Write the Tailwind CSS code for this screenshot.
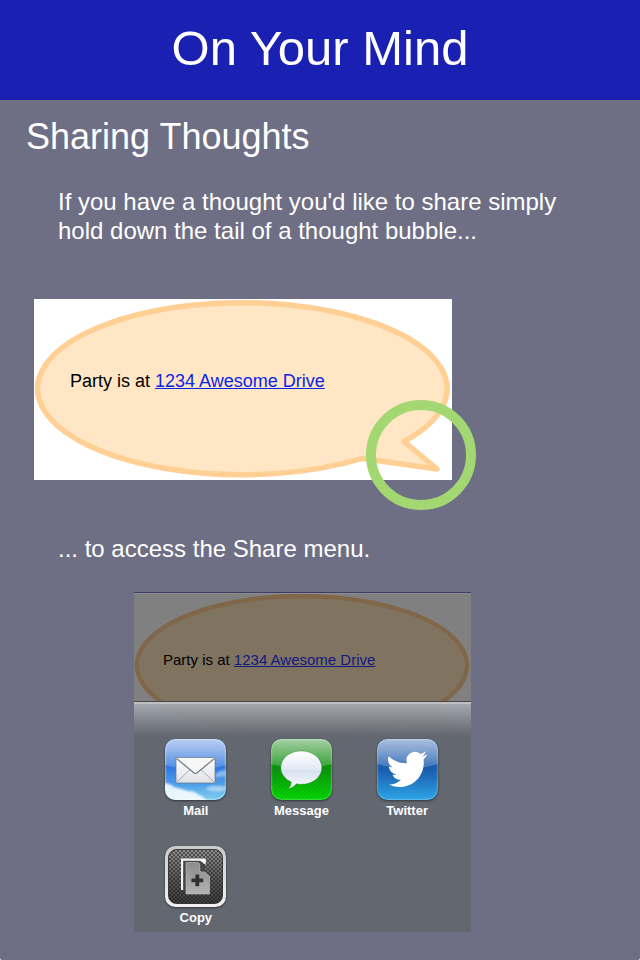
<!DOCTYPE html>
<html lang="en">
<head>
<meta charset="utf-8">
<meta name="viewport" content="width=device-width, initial-scale=1">
<title>On Your Mind</title>
<script src="https://cdn.jsdelivr.net/npm/@tailwindcss/browser@4"></script>
</head>
<body class="bg-white font-['Liberation_Sans',Arial,sans-serif]">
<div class="min-h-screen bg-[#6e6e84] text-white rounded-b-xs">
  <header class="bg-[#1a20b2] pt-6 pb-7 text-center">
    <h1 class="text-[49px] leading-12">On Your Mind</h1>
  </header>

  <main class="pt-[19px] pb-7">
    <h2 class="pl-[26px] text-[36px] leading-9">Sharing Thoughts</h2>
    <p class="mt-8 px-[58px] text-2xl leading-[29px]">If you have a thought you'd like to share simply hold down the tail of a thought bubble...</p>

    <figure class="relative mt-[54px] ml-[34px] w-[418px] h-[181px] bg-white pt-[70px] pl-9">
      <svg class="absolute inset-0 w-full" viewBox="0 0 418 181" aria-hidden="true">
        <path d="M370 142.500 L403 170 L328 159.500 A204.800 86 0 1 1 370 142.500Z" fill="#ffe6c5" stroke="#ffcf94" stroke-width="5.400" stroke-linejoin="round"/>
      </svg>
      <p class="relative text-lg leading-6 text-black">Party is at <a href="#" class="text-[#0b24e8] underline">1234 Awesome Drive</a></p>
      <div class="absolute left-[332px] top-[101px] size-[110px] rounded-full border-[10px] border-[#a3d772]"></div>
    </figure>

    <p class="mt-[54px] px-[58px] text-2xl leading-[29px]">... to access the Share menu.</p>

    <section class="relative mt-[29px] ml-[134px] w-[337px] bg-[#808080] border-t border-[#3f3d68]" aria-label="Share menu">
      <svg class="absolute left-0 top-0 w-full" viewBox="0 0 418 181" aria-hidden="true">
        <path d="M370 142.500 L403 170 L328 159.500 A204.800 86 0 1 1 370 142.500Z" fill="#807360" stroke="#80674a" stroke-width="5.400" stroke-linejoin="round"/>
      </svg>
      <div class="relative h-[108px] pt-14 pl-[29px] border-t border-[#8e8e8e]">
        <p class="text-[15px] leading-5 text-black">Party is at <a href="#" class="text-[#101a80] underline">1234 Awesome Drive</a></p>
      </div>
      <div class="relative border-t border-[#4a4746]">
        <div class="h-[2px] bg-[#bfbfc4]"></div>
        <div class="h-8 bg-linear-to-b from-[#a8acb4]/90 to-[#62666f]/95"></div>
        <div class="grid grid-cols-3 justify-items-center gap-y-[27px] bg-[#636870] pl-[9px] pr-[11px] pt-[3px] pb-[6px] text-[13px] leading-4 font-bold text-white text-shadow-[0_1px_1px_rgb(0_0_0/0.9)]">
          <button type="button" class="flex flex-col items-center gap-[3px]">
            <svg class="size-[61px] drop-shadow-[0_1px_1px_rgb(0_0_0/0.5)]" viewBox="0 0 61 61" aria-hidden="true">
              <defs>
                <linearGradient id="sky" x2="0" y2="1"><stop offset="0" stop-color="#4c83e0"/><stop offset=".45" stop-color="#2f76e0"/><stop offset=".75" stop-color="#4fa0ea"/><stop offset="1" stop-color="#84d0ee"/></linearGradient>
                <linearGradient id="gloss" x2="0" y2="1"><stop offset="0" stop-color="#fff" stop-opacity=".6"/><stop offset="1" stop-color="#fff" stop-opacity=".15"/></linearGradient>
                <linearGradient id="paper" x2="0" y2="1"><stop offset="0" stop-color="#fff"/><stop offset="1" stop-color="#dfe1e4"/></linearGradient>
                <clipPath id="tile"><rect width="61" height="61" rx="10.500"/></clipPath>
                <filter id="soft"><feGaussianBlur stdDeviation="1.300"/></filter>
              </defs>
              <g clip-path="url(#tile)">
                <rect width="61" height="61" fill="url(#sky)"/>
                <g fill="#fff" filter="url(#soft)">
                  <path d="M-2 44 Q5 44 9 48 Q17 50 23 52 Q30 52 34 56 Q40 58 42 63 H-2Z" opacity=".85"/>
                  <path d="M40 50 Q46 45 52 47 Q58 46 62 49 L58 52 Q48 54 40 50Z" opacity=".45"/>
                  <path d="M50 36 Q54 31 61 31 V38 Q55 36 52 39Z" opacity=".4"/>
                </g>
                <path d="M0 0H61V26Q30 35 0 26Z" fill="url(#gloss)"/>
                <rect x=".7" y=".7" width="59.600" height="59.600" rx="10" fill="none" stroke="#fff" stroke-opacity=".35"/>
              </g>
              <rect x="11" y="18.500" width="39" height="25.500" rx=".8" fill="url(#paper)" stroke="#62728c" stroke-width=".7"/>
              <path d="M11.500 43.500 L25.500 30 M49.500 43.500 L35.500 30" stroke="#a4a7ac" stroke-width=".9"/>
              <path d="M11.500 19 L28.800 33.300 Q30.500 34.700 32.200 33.300 L49.500 19Z" fill="#f7f7f8"/>
              <path d="M11.500 19.500 L28.800 33.800 Q30.500 35.200 32.200 33.800 L49.500 19.500" fill="none" stroke="#777b82" stroke-width="1.200"/>
            </svg>
            <span>Mail</span>
          </button>
          <button type="button" class="flex flex-col items-center gap-[3px]">
            <svg class="size-[61px] drop-shadow-[0_1px_1px_rgb(0_0_0/0.5)]" viewBox="0 0 61 61" aria-hidden="true">
              <defs>
                <linearGradient id="grass" x2="0" y2="1"><stop offset="0" stop-color="#1f8c1c"/><stop offset=".5" stop-color="#0a980a"/><stop offset="1" stop-color="#06dc06"/></linearGradient>
                <linearGradient id="speech" x2="0" y2="1"><stop offset="0" stop-color="#fff"/><stop offset=".5" stop-color="#e2e9f4"/><stop offset=".52" stop-color="#d6e0ef"/><stop offset="1" stop-color="#fbfcfe"/></linearGradient>
                <pattern id="stripes" width="3" height="3" patternUnits="userSpaceOnUse" patternTransform="rotate(45)"><rect width="1.300" height="3" fill="#004d00" opacity=".16"/></pattern>
              </defs>
              <g clip-path="url(#tile)">
                <rect width="61" height="61" fill="url(#grass)"/>
                <rect width="61" height="61" fill="url(#stripes)"/>
                <path d="M0 0H61V25Q30 34 0 25Z" fill="url(#gloss)"/>
                <rect x=".7" y=".7" width="59.600" height="59.600" rx="10" fill="none" stroke="#fff" stroke-opacity=".25"/>
              </g>
              <path d="M30.300 12 C41.800 12 50.800 19.300 50.800 28.700 S41.800 45.300 30.300 45.300 Q27.800 45.300 25.500 44.800 Q22 48.800 17.300 49.500 Q20.500 46.500 20.300 43 C14 40 9.800 34.800 9.800 28.700 C9.800 19.300 18.800 12 30.300 12Z" fill="url(#speech)" stroke="#0a6b10" stroke-opacity=".5" stroke-width=".6"/>
            </svg>
            <span>Message</span>
          </button>
          <button type="button" class="flex flex-col items-center gap-[3px]">
            <svg class="size-[61px] drop-shadow-[0_1px_1px_rgb(0_0_0/0.5)]" viewBox="0 0 61 61" aria-hidden="true">
              <defs>
                <linearGradient id="blue" x2="0" y2="1"><stop offset="0" stop-color="#2c5fae"/><stop offset=".5" stop-color="#1a5cae"/><stop offset="1" stop-color="#2da5e6"/></linearGradient>
              </defs>
              <g clip-path="url(#tile)">
                <rect width="61" height="61" fill="url(#blue)"/>
                <path d="M0 0H61V25Q30 34 0 25Z" fill="url(#gloss)"/>
                <rect x=".7" y=".7" width="59.600" height="59.600" rx="10" fill="none" stroke="#fff" stroke-opacity=".25"/>
              </g>
              <path transform="rotate(-6 31 31) translate(10.500 9.800) scale(1.720)" fill="#fff" d="M23.953 4.570a10 10 0 01-2.825.775 4.958 4.958 0 002.163-2.723c-.951.555-2.005.959-3.127 1.184a4.920 4.920 0 00-8.384 4.482C7.690 8.095 4.067 6.130 1.640 3.162a4.822 4.822 0 00-.666 2.475c0 1.710.870 3.213 2.188 4.096a4.904 4.904 0 01-2.228-.616v.060a4.923 4.923 0 003.946 4.827 4.996 4.996 0 01-2.212.085 4.936 4.936 0 004.604 3.417 9.867 9.867 0 01-6.102 2.105c-.390 0-.779-.023-1.170-.067a13.995 13.995 0 007.557 2.209c9.053 0 13.998-7.496 13.998-13.985 0-.210 0-.420-.015-.630A9.935 9.935 0 0024 4.590z"/>
            </svg>
            <span>Twitter</span>
          </button>
          <button type="button" class="flex flex-col items-center gap-[3px]">
            <svg class="size-[61px] drop-shadow-[0_1px_1px_rgb(0_0_0/0.5)]" viewBox="0 0 61 61" aria-hidden="true">
              <defs>
                <linearGradient id="metal" x2="0" y2="1"><stop offset="0" stop-color="#909090"/><stop offset=".5" stop-color="#5c5c5c"/><stop offset="1" stop-color="#3c3c3c"/></linearGradient>
                <linearGradient id="rim" x2="0" y2="1"><stop offset="0" stop-color="#c9cbcd"/><stop offset="1" stop-color="#f1f1f1"/></linearGradient>
                <linearGradient id="sheet" x2="0" y2="1"><stop offset="0" stop-color="#8c8c8c"/><stop offset="1" stop-color="#b2b2b2"/></linearGradient>
                <pattern id="mesh" width="4" height="4" patternUnits="userSpaceOnUse"><circle cx="1" cy="1" r="1" fill="#1a1a1a" opacity=".7"/><circle cx="3" cy="3" r="1" fill="#1a1a1a" opacity=".7"/></pattern>
              </defs>
              <rect width="61" height="61" rx="10.500" fill="url(#rim)"/>
              <rect x="3.500" y="3.500" width="54" height="54" rx="8" fill="url(#metal)"/>
              <rect x="3.500" y="3.500" width="54" height="54" rx="8" fill="url(#mesh)" stroke="#222" stroke-width=".8"/>
              <path d="M16 12.500 H40.500 V18.500 L35.500 14.800 H18.300 V44 H16Z" fill="#f2f2f2"/>
              <path d="M35 14 L40.500 13 V18.500Z" fill="#fff"/>
              <path d="M18.500 15 H33.500 L40 20 V25 H21 V43.500 H18.500Z" fill="#444"/>
              <path d="M21 16.500 H32.500 Q34.800 16.500 34.800 19 V24.500 Q35 26 37.500 26 Q40 26 41.500 27.500 L44.500 30.500 V48 H21Z" fill="url(#sheet)" stroke="#c4c4c4" stroke-width=".6"/>
              <path d="M30.400 28.500 h3.800 v4 h4 v3.800 h-4 v4 h-3.800 v-4 h-4 v-3.800 h4Z" fill="#303030"/>
            </svg>
            <span>Copy</span>
          </button>
        </div>
      </div>
    </section>
  </main>
</div>
</body>
</html>
